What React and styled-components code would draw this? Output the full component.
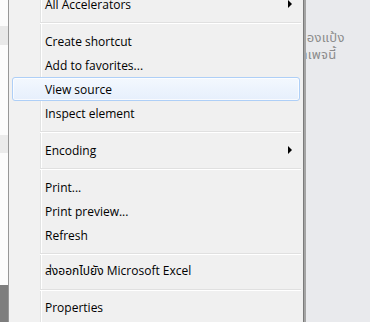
import React from 'react';
import styled, { createGlobalStyle } from 'styled-components';

const GlobalStyle = createGlobalStyle`
  html, body {
    margin: 0;
    padding: 0;
    background: #e9eaed;
  }
  body {
    font-family: "Open Sans", "Noto Sans", "Noto Sans Thai", "DejaVu Sans", sans-serif;
  }
`;

const Screen = styled.div`
  width: 370px;
  height: 322px;
  display: flex;
  overflow: hidden;
`;

const PageStrip = styled.div`
  width: 8px;
  flex-shrink: 0;
  display: flex;
  flex-direction: column;
  background: #fcfcfc;
`;

const Band = styled.div`
  height: ${(p) => p.h}px;
  flex-shrink: 0;
  background: ${(p) => p.color || 'transparent'};
`;

const Menu = styled.div`
  width: 294px;
  flex-shrink: 0;
  margin-top: -8px;
  border-left: 1px solid #979797;
  border-right: 1px solid #7a7a7a;
  background: linear-gradient(
    to right,
    #f1f1f1 0 31px,
    #e2e3e3 31px 32px,
    #ffffff 32px 33px,
    #f0f0f0 33px
  );
  display: flex;
  flex-direction: column;
`;

const Item = styled.div`
  height: 22px;
  margin: 0 3px;
  padding-left: 32px;
  border: 1px solid ${(p) => (p.active ? '#aecff7' : 'transparent')};
  border-radius: 3px;
  background: ${(p) =>
    p.active ? 'linear-gradient(to bottom, #f3f8fe, #e6effc)' : 'transparent'};
  box-shadow: ${(p) => (p.active ? 'inset 0 0 0 1px rgba(255,255,255,0.7)' : 'none')};
  display: flex;
  align-items: center;
  font-size: 12px;
  color: #000;
  white-space: nowrap;
`;

const Label = styled.span`
  flex: 1;
`;

const Arrow = styled.span`
  width: 0;
  height: 0;
  margin-right: 7px;
  border-left: 4px solid #000;
  border-top: 4px solid transparent;
  border-bottom: 4px solid transparent;
`;

const Separator = styled.div`
  height: ${(p) => p.h || 13}px;
  padding-top: 6px;
  box-sizing: border-box;
  margin: 0 2px 0 31px;

  &::before {
    content: '';
    display: block;
    height: 1px;
    background: #e0e0e0;
    border-bottom: 1px solid #ffffff;
  }
`;

const Backdrop = styled.div`
  flex: 1;
  border-left: 2px solid #a4a4a4;
  overflow: hidden;
  padding-top: 29px;
  color: #8c8c8c;
  font-size: 13px;
  line-height: 17px;
  letter-spacing: 0.3px;
`;

const HiddenText = styled.div`
  margin-left: ${(p) => -p.cut}px;
  white-space: nowrap;
`;

const menu = [
  { label: 'All Accelerators', sub: true },
  { sep: true },
  { label: 'Create shortcut' },
  { label: 'Add to favorites...' },
  { label: 'View source', active: true },
  { label: 'Inspect element' },
  { sep: true },
  { label: 'Encoding', sub: true },
  { sep: true },
  { label: 'Print...' },
  { label: 'Print preview...' },
  { label: 'Refresh' },
  { sep: true, h: 12 },
  { label: 'ส่งออกไปยัง Microsoft Excel' },
  { sep: true, h: 12 },
  { label: 'Properties' },
];

const App = () => {
  return (
    <>
      <GlobalStyle />
      <Screen>
        <PageStrip>
          <Band h={26} />
          <Band h={19} color="#e9e9e9" />
          <Band h={90} />
          <Band h={18} color="#ebebeb" />
          <Band h={132} />
          <Band h={37} color="#7e7e7e" />
        </PageStrip>
        <Menu>
          {menu.map((m, i) =>
            m.sep ? (
              <Separator key={i} h={m.h} />
            ) : (
              <Item key={i} active={m.active}>
                <Label>{m.label}</Label>
                {m.sub && <Arrow />}
              </Item>
            )
          )}
        </Menu>
        <Backdrop>
          <HiddenText cut={7}>ลองแป้ง</HiddenText>
          <HiddenText cut={20}>หน้าเพจนี้</HiddenText>
        </Backdrop>
      </Screen>
    </>
  );
};

export default App;
